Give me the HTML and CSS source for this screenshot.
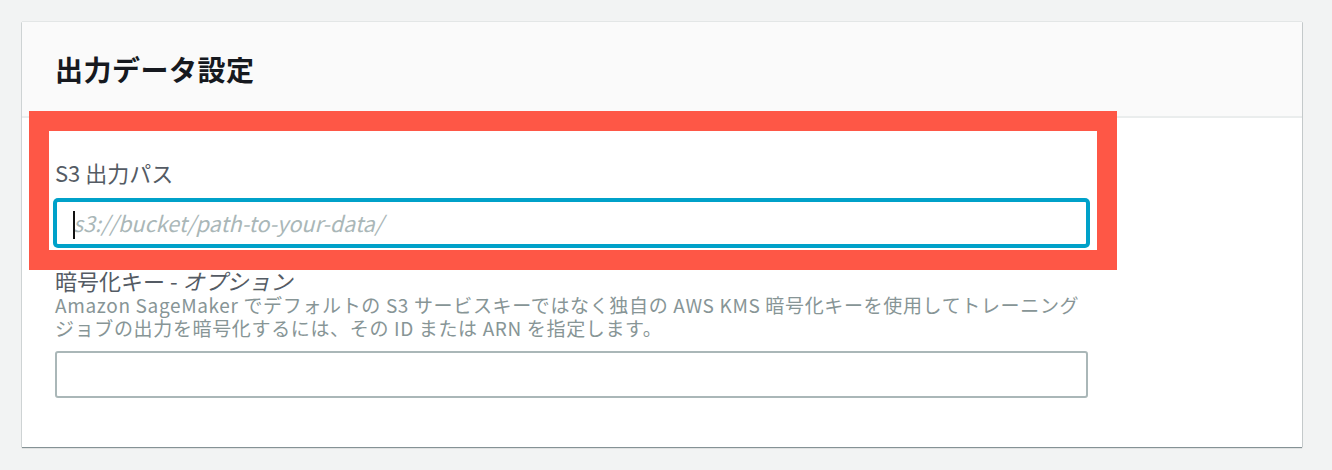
FILE: index.html
```html
<!DOCTYPE html>
<html lang="ja">
<head>
<meta charset="utf-8">
<title>出力データ設定</title>
<link rel="stylesheet" href="styles.css">
</head>
<body>
<section class="card">
  <header class="card-header">
    <h2 class="card-title">出力データ設定</h2>
  </header>
  <div class="card-body">
    <div class="field">
      <label class="field-label">S3 出力パス</label>
      <div class="input input-focused">
        <span class="caret"></span>
        <span class="placeholder">s3://bucket/path-to-your-data/</span>
      </div>
    </div>
    <div class="field field-second">
      <label class="field-label">暗号化キー - <i class="optional">オプション</i></label>
      <p class="field-desc">Amazon SageMaker でデフォルトの S3 サービスキーではなく独自の AWS KMS 暗号化キーを使用してトレーニング<br>ジョブの出力を暗号化するには、その ID または ARN を指定します。</p>
      <div class="input"></div>
    </div>
  </div>
  <div class="highlight"></div>
</section>
</body>
</html>
```

FILE: styles.css
```css
html, body {
  margin: 0;
  padding: 0;
}
body {
  background: #f2f3f3;
  font-family: "Noto Sans CJK JP", "Noto Sans", sans-serif;
  padding: 22px 30px 23px 22px;
}
.card {
  position: relative;
  width: 1280px;
  background: #ffffff;
  box-shadow: 0 1px 1px 0 rgba(0, 28, 36, 0.45), 1px 0 0 0 rgba(0, 28, 36, 0.12), 0 -1px 0 0 rgba(0, 28, 36, 0.06), -1px 0 0 0 rgba(0, 28, 36, 0.08);
}
.card-header {
  height: 94px;
  background: #fafafa;
  border-bottom: 2px solid #eaeded;
  display: flex;
  align-items: center;
  padding: 0 33px;
}
.card-title {
  margin: 0;
  font-size: 28px;
  font-weight: 700;
  color: #16191f;
  line-height: 36px;
  letter-spacing: 0.5px;
}
.card-body {
  padding: 41px 33px 49px;
  display: flex;
  flex-direction: column;
}
.field {
  display: flex;
  flex-direction: column;
  width: 1033px;
}
.field-second {
  margin-top: 21px;
}
.field-label {
  font-size: 22px;
  line-height: 26px;
  color: #545b64;
}
.optional {
  font-style: italic;
}
.field-desc {
  margin: 0;
  font-size: 19px;
  line-height: 23px;
  letter-spacing: 0.65px;
  color: #879596;
  white-space: nowrap;
}
.input {
  position: relative;
  box-sizing: border-box;
  height: 46px;
  border: 2px solid #aab7b8;
  border-radius: 3px;
  background: #fff;
  display: flex;
  align-items: center;
  padding-left: 16px;
}
.field .field-label + .input {
  margin-top: 15px;
}
.field-desc + .input {
  margin-top: 12px;
  height: 47px;
}
.input-focused {
  border-color: #00a1c9;
  box-shadow: 0 0 0 2px #00a1c9;
}
.placeholder {
  font-size: 21.6px;
  font-style: italic;
  color: #aab7b8;
  line-height: 28px;
}
.caret {
  position: absolute;
  left: 16px;
  top: 9px;
  width: 2px;
  height: 28px;
  background: #111;
}
.highlight {
  position: absolute;
  left: 7px;
  top: 89px;
  width: 1048px;
  height: 119px;
  border: 20px solid #fe5746;
  pointer-events: none;
}
```
